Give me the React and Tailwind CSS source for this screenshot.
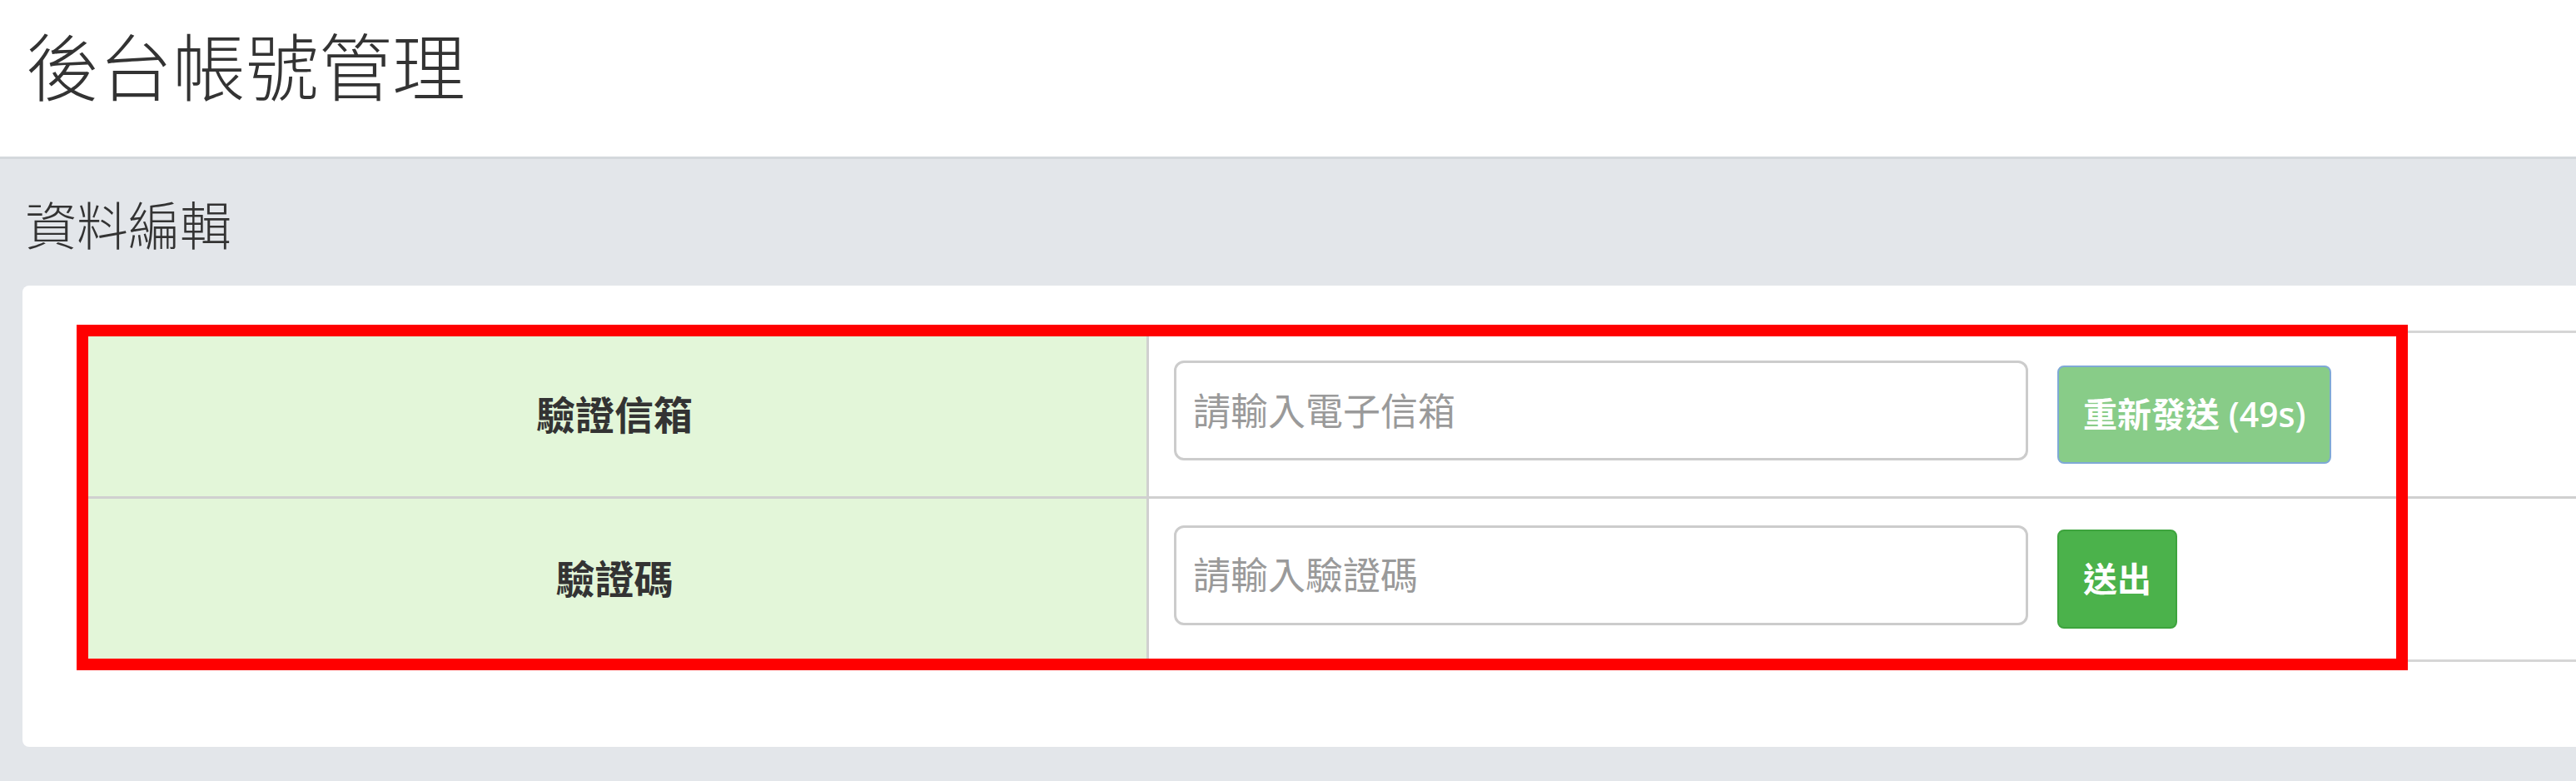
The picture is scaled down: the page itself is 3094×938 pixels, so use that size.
import React from 'react'

const rows = [
  { label: '驗證信箱', placeholder: '請輸入電子信箱', button: '重新發送 (49s)', disabled: true },
  { label: '驗證碼', placeholder: '請輸入驗證碼', button: '送出', disabled: false },
]

export default function App() {
  return (
    <div className="min-h-screen w-full overflow-hidden bg-[#e3e6ea] font-['Open_Sans','Noto_Sans_CJK_TC',sans-serif] text-[#333]">
      <header className="h-[191px] border-b-[3px] border-[#d4d8dc] bg-white pl-[31px] pt-[36px]">
        <h1 className="text-[88px] font-light leading-none">後台帳號管理</h1>
      </header>

      <section className="pl-[27px]">
        <h2 className="mt-[49px] pl-[3px] text-[62px] font-light leading-none">資料編輯</h2>

        <div className="-mr-[40px] mt-[41px] rounded-[8px] bg-white pb-[102px] pl-[72px] pt-[54px]">
          <div className="relative">
            <div className="border-y-[3px] border-[#d6d6d6]">
              {rows.map((row, i) => (
                <div
                  key={row.label}
                  className={`grid h-[196px] grid-cols-[1281px_1fr] ${i > 0 ? 'border-t-[3px] border-[#d0d0d0]' : ''}`}
                >
                  <div className="flex items-center justify-center border-r-[3px] border-[#d0d0d0] bg-[#e3f6d9] text-[47px] font-bold">
                    {row.label}
                  </div>
                  <div className="flex items-center pl-[30px]">
                    <input
                      type="text"
                      placeholder={row.placeholder}
                      className="mb-[10px] h-[120px] w-[1026px] rounded-[12px] border-[3px] border-[#cccccc] bg-white px-[20px] text-[45px] outline-none placeholder:text-[#9a9a9a]"
                    />
                    {row.disabled ? (
                      <button className="ml-[35px] h-[118px] rounded-[8px] border-[2px] border-[#7fa9d6] bg-[#88cc88] px-[29px] text-[41px] font-semibold text-white">
                        {row.button}
                      </button>
                    ) : (
                      <button className="ml-[35px] h-[119px] rounded-[8px] border-[2px] border-[#3da43d] bg-[#4bb24b] px-[29px] text-[41px] font-semibold text-white">
                        {row.button}
                      </button>
                    )}
                  </div>
                </div>
              ))}
            </div>
            {/* red highlight frame over the table */}
            <div className="pointer-events-none absolute -left-[7px] -top-[7px] h-[415px] w-[2800px] border-[14px] border-[#ff0000]" />
          </div>
        </div>
      </section>
    </div>
  )
}
